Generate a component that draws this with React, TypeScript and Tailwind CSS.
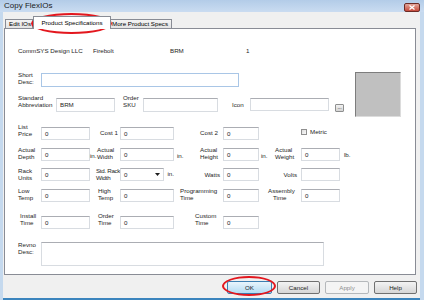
import React from 'react';

const row =
  'grid grid-cols-[23px_49px_6px_24px_54px_6px_43px_36px_6px_36px_39px_auto] items-start';

function Lbl({ children, className = '' }: { children: React.ReactNode; className?: string }) {
  return (
    <div className={`text-[6.2px] leading-[6.5px] whitespace-nowrap text-[#1e1e1e] ${className}`}>
      {children}
    </div>
  );
}

function Field({ value = '', className = '' }: { value?: string; className?: string }) {
  return (
    <div
      className={`h-[13px] border border-[#d8dce1] border-t-[#abadb3] bg-white pl-[3px] text-[6.2px] leading-[11px] text-[#1e1e1e] ${className}`}
    >
      {value}
    </div>
  );
}

function Button({ label, primary, disabled }: { label: string; primary?: boolean; disabled?: boolean }) {
  let tone = 'border-[#707070] bg-gradient-to-b from-[#f3f3f3] to-[#d6d6d6] text-[#1e1e1e]';
  if (primary) tone = 'border-[#3c7fb1] bg-gradient-to-b from-[#e9f5fc] to-[#b4dcf3] text-[#1e1e1e]';
  if (disabled) tone = 'border-[#b5b8bb] bg-[#f4f4f4] text-[#8d8d8d]';
  return (
    <div
      className={`h-[13px] rounded-[2px] border flex items-center justify-center text-[6.2px] ${tone} ${
        label === 'OK' ? 'w-[45px]' : label === 'Apply' ? 'w-[44px]' : 'w-[43px]'
      }`}
    >
      {label}
    </div>
  );
}

export default function App() {
  return (
    <div className="relative w-[424px] h-[300px] overflow-hidden flex flex-col bg-[#c5d9ee] font-['Liberation_Sans',Arial,sans-serif]">
      {/* title bar */}
      <div className="h-[12px] flex items-start justify-between pl-[4px] pr-[4px] bg-gradient-to-b from-[#b3cce8] to-[#cadcf1]">
        <span className="text-[8px] leading-[11px] text-[#1b1b1b]">Copy FlexIOs</span>
        <div className="mt-[3px] w-[16px] h-[9px] rounded-[2px] border border-[#6d2b25] bg-gradient-to-b from-[#e2a69b] to-[#c6483a] flex items-center justify-center">
          <svg width="6" height="5" viewBox="0 0 6 5">
            <path d="M0.5 0.5 L5.5 4.5 M5.5 0.5 L0.5 4.5" stroke="#fff" strokeWidth="1.3" />
          </svg>
        </div>
      </div>

      {/* body */}
      <div className="flex-1 flex flex-col ml-[3px] mr-[4px] bg-[#f0f0f0] border-b-2 border-[#3b84bd]">
        {/* tabs */}
        <div className="h-[16px] flex items-end pl-[2px]">
          <div className="w-[28px] h-[9px] border border-b-0 border-[#898c95] bg-gradient-to-b from-[#f4f4f4] to-[#e3e3e3] text-[6.2px] leading-[8px] pl-[3px] whitespace-nowrap overflow-hidden">
            Edit IOs
          </div>
          <div className="relative z-10 -mb-[1px] w-[78px] h-[13px] border border-b-0 border-[#898c95] bg-white text-[6.2px] leading-[11px] text-center whitespace-nowrap">
            Product Specifications
          </div>
          <div className="w-[61px] h-[9px] border border-b-0 border-l-0 border-[#898c95] bg-gradient-to-b from-[#f4f4f4] to-[#e3e3e3] text-[6.2px] leading-[8px] pl-[1px] whitespace-nowrap overflow-hidden">
            More Product Specs
          </div>
        </div>

        {/* panel */}
        <div className="ml-[1px] mr-[4px] h-[247px] border border-[#898c95] bg-white pl-[13px] pt-[18px] flex flex-col">
          <div className="flex text-[6.2px] leading-[7px] text-[#1e1e1e]">
            <span className="w-[75px]">CommSYS Design LLC</span>
            <span className="w-[77px]">Firebolt</span>
            <span className="w-[76px]">BRM</span>
            <span>1</span>
          </div>

          <div className="mt-[18px] flex items-start h-[45px]">
            <div className="w-[337px] flex flex-col">
              <div className="flex items-start">
                <Lbl className="w-[23px]">
                  Short
                  <br />
                  Desc:
                </Lbl>
                <div className="mt-[1px] w-[198px] h-[14px] border border-[#a9c6e6] bg-white" />
              </div>
              <div className="mt-[8px] flex items-start">
                <Lbl className="w-[38px]">
                  Standard
                  <br />
                  Abbreviation
                </Lbl>
                <Field value="BRM" className="mt-[3px] w-[59px] h-[14px] leading-[12px]" />
                <Lbl className="ml-[8px] w-[20px]">
                  Order
                  <br />
                  SKU
                </Lbl>
                <Field className="mt-[3px] w-[75px] h-[14px]" />
                <Lbl className="ml-[14px] mt-[7px] w-[18px]">Icon</Lbl>
                <Field className="mt-[3px] w-[79px]" />
                <div className="ml-[6px] mt-[9px] w-[9px] h-[8px] rounded-[1px] border border-[#8e8f8f] bg-gradient-to-b from-[#f2f2f2] to-[#d4d4d4] text-[5px] leading-[4px] text-center">
                  ...
                </div>
              </div>
            </div>
            <div className="w-[46px] h-[45px] bg-[#c0c0c0] border border-[#7d7d7d] border-r-[#dcdcdc] border-b-[#dcdcdc]" />
          </div>

          {/* list price */}
          <div className={`${row} mt-[7px] h-[23px]`}>
            <Lbl>
              List
              <br />
              Price
            </Lbl>
            <Field value="0" className="mt-[3px]" />
            <div />
            <Lbl className="mt-[6px] pl-[4px]">Cost 1</Lbl>
            <Field value="0" className="mt-[3px]" />
            <div />
            <Lbl className="mt-[6px] text-right pr-[5px]">Cost 2</Lbl>
            <Field value="0" className="mt-[3px]" />
            <div />
            <div />
            <div className="col-span-2 mt-[5px] flex items-center gap-[3px]">
              <div className="w-[6px] h-[6px] border border-[#8f8f8f] bg-gradient-to-br from-[#dcdcdc] to-[#fafafa]" />
              <Lbl>Metric</Lbl>
            </div>
          </div>

          {/* actual dims */}
          <div className={`${row} h-[21px]`}>
            <Lbl>
              Actual
              <br />
              Depth
            </Lbl>
            <Field value="0" className="mt-[1px]" />
            <Lbl className="mt-[6px]">in.</Lbl>
            <Lbl className="pl-[1px]">
              Actual
              <br />
              Width
            </Lbl>
            <Field value="0" className="mt-[1px]" />
            <Lbl className="mt-[6px] pl-[3px]">in.</Lbl>
            <Lbl className="pl-[20px]">
              Actual
              <br />
              Height
            </Lbl>
            <Field value="0" className="mt-[1px]" />
            <Lbl className="mt-[6px] pl-[2px]">in.</Lbl>
            <Lbl className="pl-[10px]">
              Actual
              <br />
              Weight
            </Lbl>
            <Field value="0" className="mt-[1px]" />
            <Lbl className="mt-[5px] pl-[4px]">lb.</Lbl>
          </div>

          {/* rack */}
          <div className={`${row} h-[20px]`}>
            <Lbl>
              Rack
              <br />
              Units
            </Lbl>
            <Field value="0" />
            <div />
            <Lbl className="tracking-[-0.3px]">
              Std. Rack
              <br />
              Width
            </Lbl>
            <div className="flex items-start">
              <div className="w-[46px] h-[13px] border border-[#d8dce1] border-t-[#abadb3] bg-white flex items-center justify-between pl-[3px] pr-[3px]">
                <span className="text-[6.2px] text-[#1e1e1e]">0</span>
                <svg width="5" height="3" viewBox="0 0 5 3">
                  <path d="M0 0 L5 0 L2.5 3 Z" fill="#1e1e1e" />
                </svg>
              </div>
              <Lbl className="ml-[3px] mt-[3px]">in.</Lbl>
            </div>
            <div />
            <Lbl className="mt-[4px] text-right pr-[3px]">Watts</Lbl>
            <Field value="0" />
            <div />
            <Lbl className="mt-[4px] text-right pr-[4px]">Volts</Lbl>
            <Field />
          </div>

          {/* temps */}
          <div className={`${row} h-[25px]`}>
            <Lbl>
              Low
              <br />
              Temp
            </Lbl>
            <Field value="0" className="mt-[1px]" />
            <div />
            <Lbl className="pl-[2px]">
              High
              <br />
              Temp
            </Lbl>
            <Field value="0" className="mt-[1px]" />
            <div />
            <Lbl>
              Programming
              <br />
              Time
            </Lbl>
            <Field value="0" className="mt-[1px]" />
            <div />
            <Lbl className="pl-[3px]">
              Assembly
              <br />
              <span className="pl-[5px]">Time</span>
            </Lbl>
            <Field value="0" className="mt-[1px]" />
          </div>

          {/* times */}
          <div className={`${row} h-[29px]`}>
            <Lbl className="pl-[2px]">
              Install
              <br />
              Time
            </Lbl>
            <Field value="0" className="mt-[3px]" />
            <div />
            <Lbl className="pl-[2px]">
              Order
              <br />
              Time
            </Lbl>
            <Field value="0" className="mt-[3px]" />
            <div />
            <Lbl className="pl-[15px]">
              Custom
              <br />
              Time
            </Lbl>
            <Field value="0" className="mt-[3px]" />
          </div>

          {/* revno */}
          <div className="flex items-start">
            <Lbl className="w-[23px]">
              Revno
              <br />
              Desc:
            </Lbl>
            <div className="w-[283px] h-[24px] border border-[#d8dce1] border-t-[#abadb3] bg-white" />
          </div>
        </div>

        {/* buttons */}
        <div className="mt-[6px] flex justify-end gap-[5px] pr-[3px]">
          <Button label="OK" primary />
          <Button label="Cancel" />
          <Button label="Apply" disabled />
          <Button label="Help" />
        </div>
      </div>

      {/* annotation ellipses */}
      <div className="absolute left-[31px] top-[13px] w-[81px] h-[21px] rounded-[50%] border-2 border-[#e3171e]" />
      <div className="absolute left-[222px] top-[276px] w-[54px] h-[20px] rounded-[50%] border-2 border-[#e3171e]" />
    </div>
  );
}
